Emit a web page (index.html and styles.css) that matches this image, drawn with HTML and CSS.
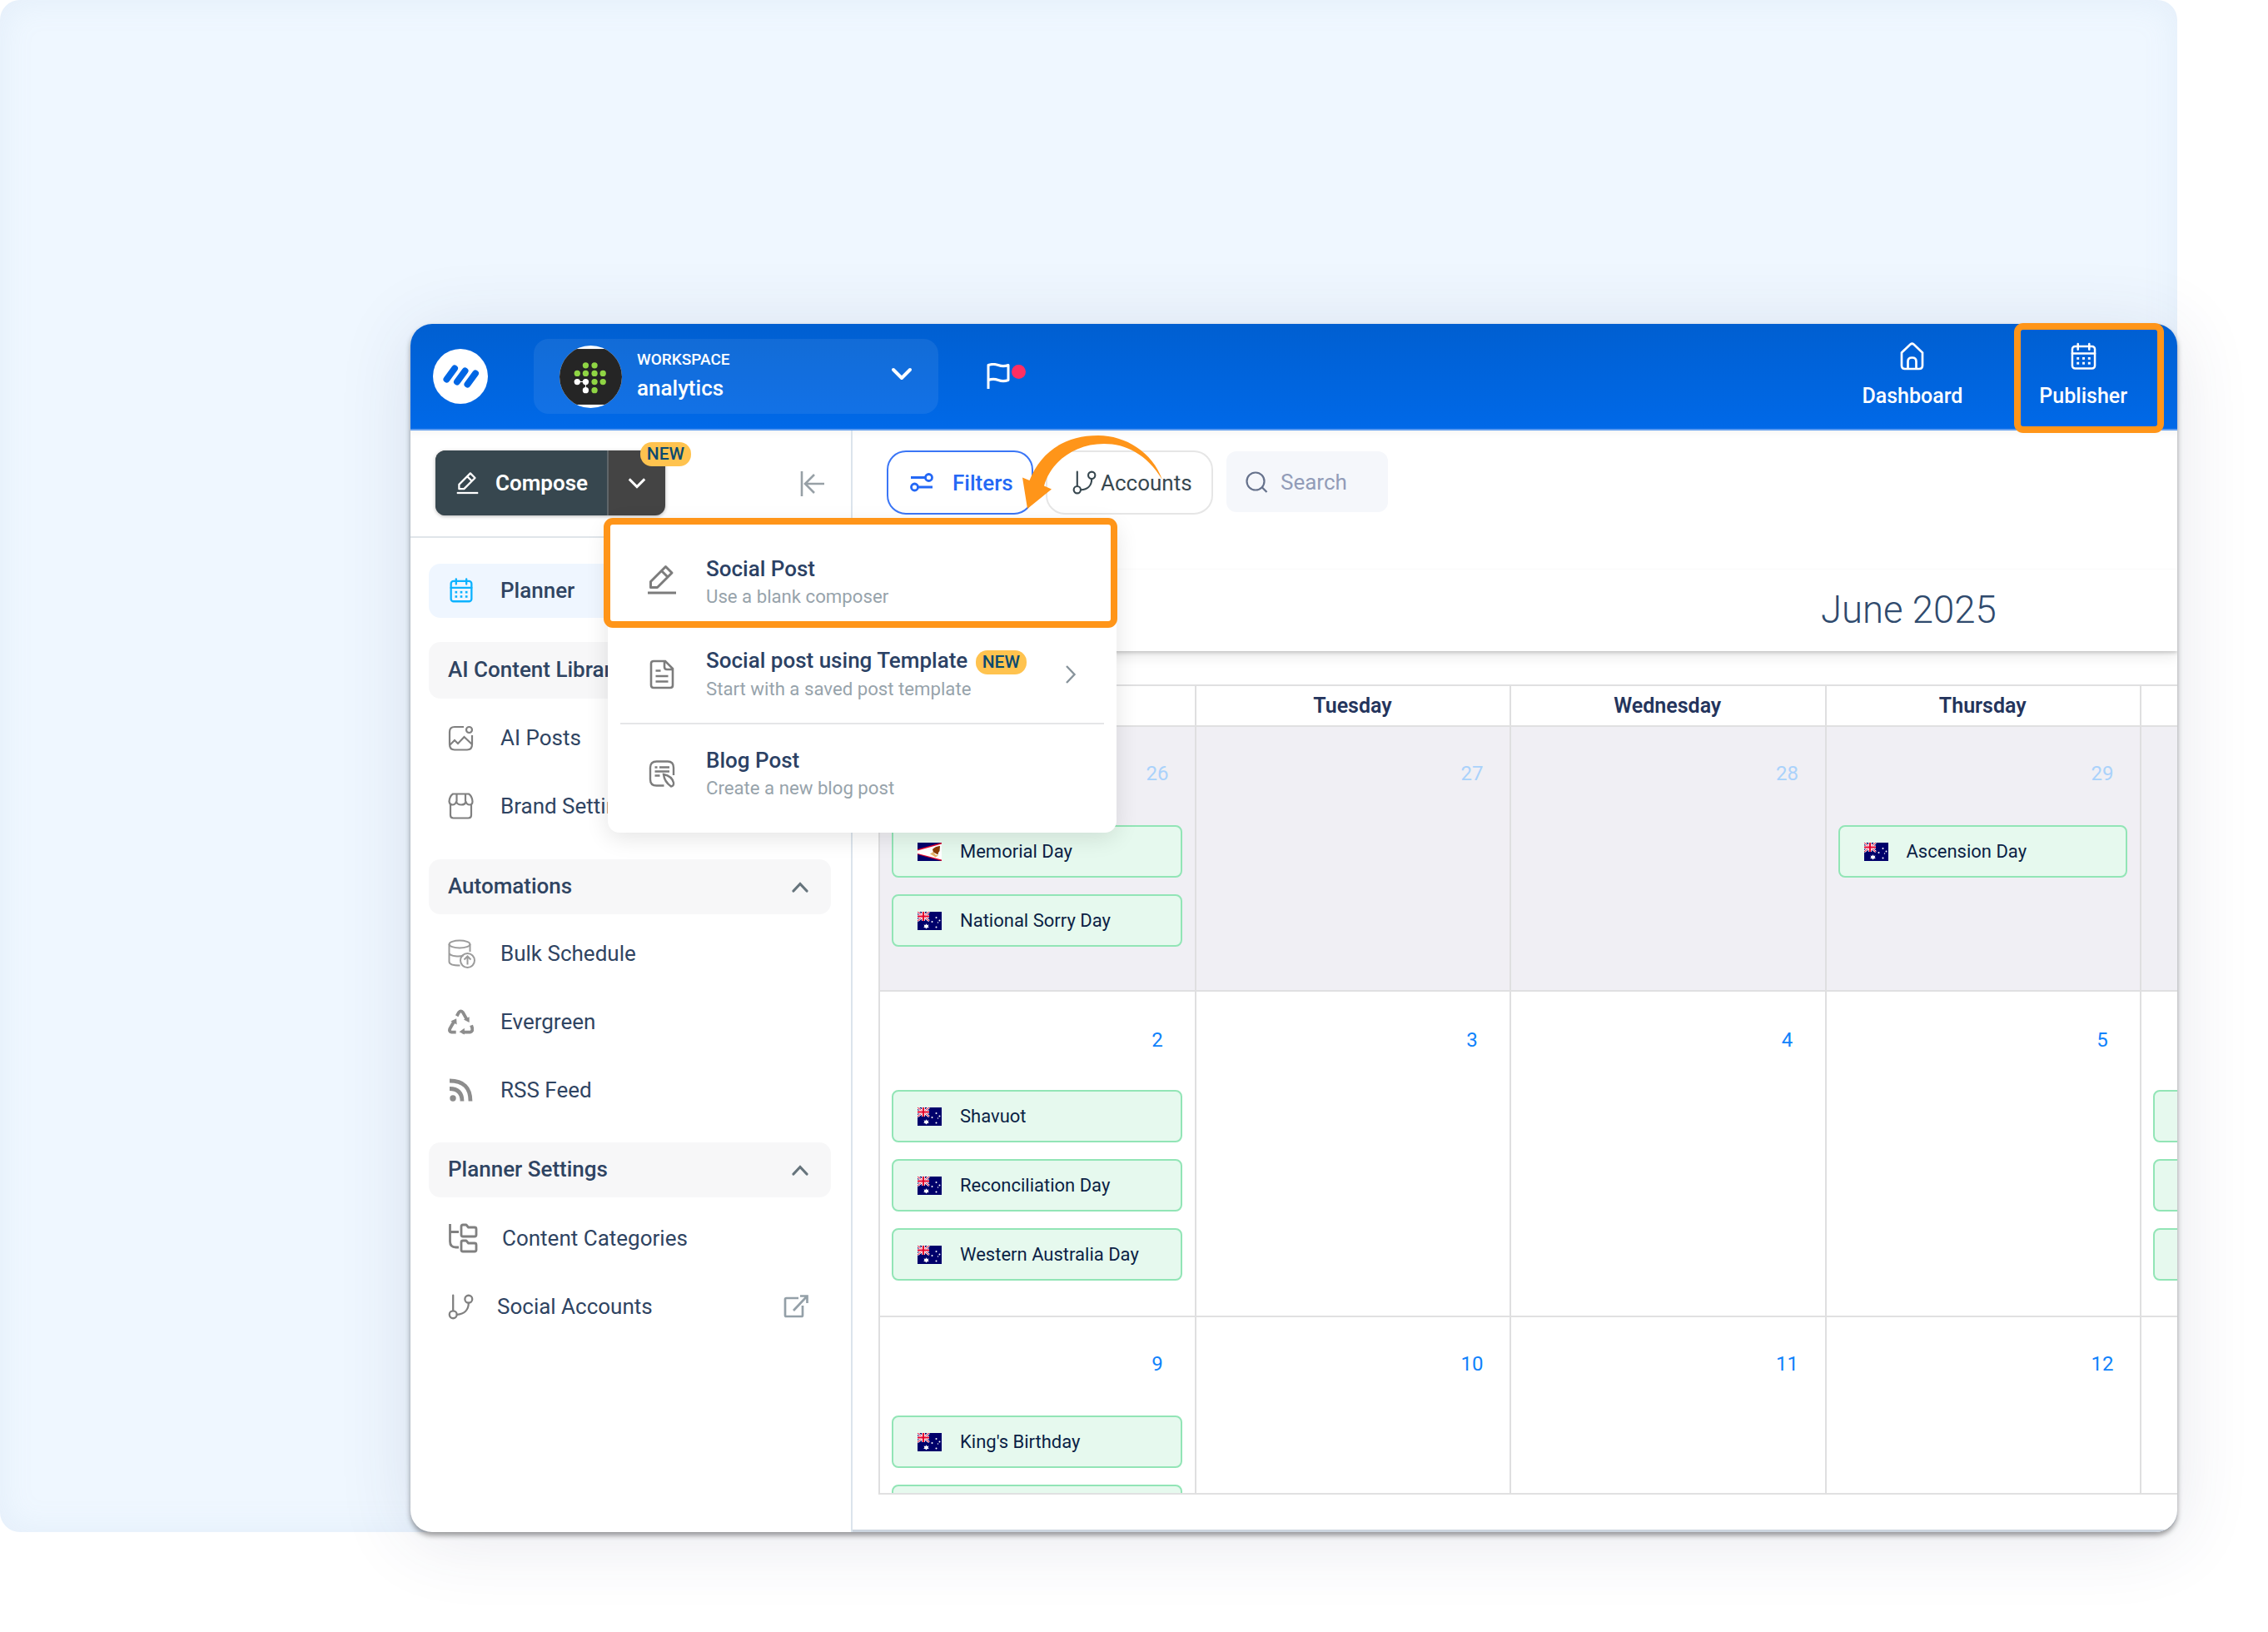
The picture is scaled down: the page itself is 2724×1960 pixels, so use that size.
FILE: index.html
```html
<!DOCTYPE html>
<html lang="en">
  <head>
    <meta charset="utf-8">
    <title>Planner</title>
    <link rel="stylesheet" href="styles.css">
  </head>
  <body>
    <svg class="sprite" aria-hidden="true">
      <symbol id="calendar" viewBox="0 0 32 34">
        <g fill="none" stroke="currentColor" stroke-width="2.6" stroke-linecap="round">
          <rect x="2" y="4.500" width="28" height="27.500" rx="3.500"/>
          <path d="M2 13.500h28M9 1.500v7M23 1.500v7"/>
        </g>
        <g fill="currentColor">
          <rect x="7.500" y="18" width="3" height="3"/><rect x="14.500" y="18" width="3" height="3"/><rect x="21.500" y="18" width="3" height="3"/>
          <rect x="7.500" y="24" width="3" height="3"/><rect x="14.500" y="24" width="3" height="3"/><rect x="21.500" y="24" width="3" height="3"/>
        </g>
      </symbol>
      <symbol id="pencil" viewBox="0 0 36 36">
        <g fill="none" stroke="currentColor" stroke-width="3" stroke-linejoin="round">
          <path d="M4.500 27.500V20.500L22.500 2.500l7.500 7.500L12.500 27.500zM17.500 7.500l7.500 7.500"/>
          <path d="M1 34h34"/>
        </g>
      </symbol>
      <symbol id="branch" viewBox="0 0 30 30">
        <g fill="none" stroke="currentColor" stroke-width="2.2" stroke-linecap="round">
          <circle cx="6" cy="24" r="4.300"/><circle cx="24" cy="6" r="4.300"/>
          <path d="M6 1.500v18M24 10.500c0 8-5 13-13.500 13.500"/>
        </g>
      </symbol>
      <symbol id="up" viewBox="0 0 20 14">
        <path d="M2 12l8-8.500 8 8.500" fill="none" stroke="currentColor" stroke-width="3.200" stroke-linecap="round"/>
      </symbol>
      <symbol id="down" viewBox="0 0 26 16">
        <path d="M3 3l10 10L23 3" fill="none" stroke="currentColor" stroke-width="4" stroke-linecap="round" stroke-linejoin="round"/>
      </symbol>
      <symbol id="au" viewBox="0 0 29 22">
        <rect width="29" height="22" fill="#00006b"/>
        <path d="M0 0l14 11M14 0L0 11" stroke="#fff" stroke-width="2.600"/>
        <path d="M0 0l14 11M14 0L0 11" stroke="#e4002b" stroke-width="1"/>
        <path d="M7 0v11M0 5.500h14" stroke="#fff" stroke-width="3.800"/>
        <path d="M7 0v11M0 5.500h14" stroke="#e4002b" stroke-width="2.200"/>
        <g fill="#fff">
          <path d="M10.500 14.300l1 1.700 2-.4-.9 1.800 1.200 1.500-2 .2-1.300 1.500-1.300-1.500-2-.2 1.200-1.500-.9-1.800 2 .4z"/>
          <circle cx="22.500" cy="7" r="1"/><circle cx="17.500" cy="12" r="1"/><circle cx="26.500" cy="10.500" r="1"/><circle cx="22.500" cy="18.500" r="1"/><circle cx="24.500" cy="13" r=".7"/>
        </g>
      </symbol>
      <symbol id="as" viewBox="0 0 29 22">
        <rect width="29" height="22" fill="#00006b"/>
        <path d="M29 0L0 8v6L29 22z" fill="#e4002b"/>
        <path d="M29 1.500L0 9.500v3.500L29 20.500z" fill="#fff"/>
        <path d="M18 8c3-3 5.500-3.500 9-4l-.5 6-1.500 2-.5 2.500-3.500-2-2-1z" fill="#8a3a00"/>
        <path d="M15 13.500l4-2.500 2.500 3.500 3.500 1-3.500 2-3-2z" fill="#e5b36a"/>
      </symbol>
    </svg>

    <div class="backdrop">
      <div class="window">
        <header class="topbar">
          <svg class="logo" viewBox="0 0 66 66">
            <circle cx="33" cy="33" r="33" fill="#fff"/>
            <path d="M16.500 36.500L26 23.500M29 39.500L38.500 26.500M41.500 42.500L51 29.500" stroke="#0066e4" stroke-width="8" stroke-linecap="round"/>
          </svg>
          <div class="workspace">
            <svg class="avatar" viewBox="0 0 74 74">
              <clipPath id="round"><circle cx="37" cy="37" r="37"/></clipPath>
              <g clip-path="url(#round)">
                <rect width="74" height="74" fill="#fff"/>
                <rect y="4" width="74" height="66" fill="#252525"/>
              </g>
              <g fill="#8fd544">
                <circle cx="31" cy="23.500" r="3.600"/><circle cx="41.500" cy="23.500" r="3.600"/>
                <circle cx="21" cy="33" r="3.600"/><circle cx="31" cy="33" r="3.600"/><circle cx="41.500" cy="33" r="3.600"/><circle cx="51.500" cy="33" r="3.600"/>
                <circle cx="41.500" cy="43" r="3.600"/><circle cx="51.500" cy="43" r="3.600"/><circle cx="41.500" cy="53" r="3.600"/>
              </g>
              <g fill="#fff"><circle cx="21" cy="43" r="3.600"/><circle cx="31" cy="43" r="3.600"/><circle cx="31" cy="53" r="3.600"/></g>
              <path d="M21 43h10v10" fill="none" stroke="#fff"/>
            </svg>
            <div class="workspace-name">
              <small>WORKSPACE</small>
              <strong>analytics</strong>
            </div>
            <svg class="workspace-arrow"><use href="#down"/></svg>
          </div>
          <div class="flag">
            <svg width="28" height="32" viewBox="0 0 28 32">
              <path d="M2 31V2.500c4-1.500 8-1.500 12 0s8 1.500 12 0v18c-4 1.500-8 1.500-12 0s-8-1.500-12 0" fill="none" stroke="#fff" stroke-width="3" stroke-linejoin="round"/>
            </svg>
            <i class="dot"></i>
          </div>
          <nav class="mainnav">
            <a class="dashboard">
              <svg width="29" height="34" viewBox="0 0 29 34">
                <path d="M2 12.500L12.500 2.500q2-1.500 4 0L27 12.500V28q0 4-4 4H6q-4 0-4-4zM9.500 32V23q0-4.500 5-4.500t5 4.500v9" fill="none" stroke="#fff" stroke-width="2.700"/>
              </svg>
              Dashboard
            </a>
            <a class="publisher">
              <svg width="31" height="34"><use href="#calendar"/></svg>
              Publisher
            </a>
          </nav>
        </header>

        <div class="content">
          <aside class="sidebar">
            <div class="compose-row">
              <div class="compose">
                <div class="compose-main">
                  <svg width="27" height="28"><use href="#pencil"/></svg>
                  Compose
                </div>
                <div class="compose-more"><svg width="24" height="16" viewBox="0 0 26 16"><path d="M3 3l10 10L23 3" fill="none" stroke="currentColor" stroke-width="3.200"/></svg></div>
                <span class="new new-compose">NEW</span>
              </div>
              <svg class="collapse" width="30" height="32" viewBox="0 0 30 32">
                <path d="M2 1v30M29 16H6M17 5L6 16l11 11" fill="none" stroke="#97a0a6" stroke-width="2.600"/>
              </svg>
            </div>
            <div class="menu">
              <div class="item active">
                <svg class="ico" width="30" height="30"><use href="#calendar"/></svg>Planner
              </div>
              <div class="group first">AI Content Library</div>
              <div class="item">
                <svg class="ico" width="31" height="31" viewBox="0 0 31 31">
                  <g fill="none" stroke="currentColor" stroke-width="2.200">
                    <path d="M19 2H8Q2 2 2 8v15q0 6.500 6 6.500h15q6 0 6-6.500V12"/><circle cx="25.500" cy="5.500" r="3.500"/>
                    <path d="M2 24l6-6 4 4 7.500-8 9.500 9"/>
                  </g>
                </svg>AI Posts
              </div>
              <div class="item">
                <svg class="ico" width="31" height="32" viewBox="0 0 31 32">
                  <g fill="none" stroke="currentColor" stroke-width="2.200">
                    <path d="M3 14v13q0 3.500 3.500 3.500h18Q28 30.500 28 27V14"/>
                    <path d="M6 1.500h19q4 2.500 4.500 9 0 4-3.500 4t-4.500-4q-.5 4-5.500 4t-6-4q-1 4-4.500 4t-4-4Q2 4 6 1.500zM10.500 1.500v9M21 1.500v9"/>
                  </g>
                </svg>Brand Settings
              </div>
              <div class="group">Automations<svg class="up"><use href="#up"/></svg></div>
              <div class="item">
                <svg class="ico light" width="33" height="35" viewBox="0 0 33 35">
                  <g fill="none" stroke="currentColor" stroke-width="2">
                    <ellipse cx="14" cy="6" rx="12.500" ry="4.500"/>
                    <path d="M1.500 6v21c0 3 5 4.500 13 4.500M1.500 17c2 3.500 12 4.500 17 2.500M26.500 6v9"/>
                    <circle cx="23.500" cy="25.500" r="8.500"/><path d="M23.500 30.500v-10M19.500 24.500l4-4 4 4"/>
                  </g>
                </svg>Bulk Schedule
              </div>
              <div class="item">
                <svg class="ico" width="31" height="31" viewBox="0 0 32 31">
                  <g fill="none" stroke="#8d8d8d" stroke-width="4">
                    <path d="M11 8l2.500-4.500q2.500-3 5 0L23 11.500M8 14l-5.500 9.500q-1.500 4 2 4.500H10M29 19.500l1 3q1 5-2.500 5.500H18"/>
                  </g>
                  <path d="M26.500 9v7l-7-3.500zM3.500 14.500l7-3.500.5 7.500zM20.500 23v8L14 27.500z" fill="#8d8d8d"/>
                </svg>Evergreen
              </div>
              <div class="item">
                <svg class="ico" width="31" height="30" viewBox="0 0 31 30">
                  <circle cx="6" cy="25" r="3.700" fill="#8d8d8d"/>
                  <path d="M2 13.500q15 0 15 15M2 4q25 0 25 24.500" fill="none" stroke="#8d8d8d" stroke-width="4.800"/>
                </svg>RSS Feed
              </div>
              <div class="group settings">Planner Settings<svg class="up"><use href="#up"/></svg></div>
              <div class="item wide">
                <svg class="ico" width="36" height="36" viewBox="0 0 36 36">
                  <g fill="none" stroke="currentColor" stroke-width="2.800" stroke-linejoin="round">
                    <path d="M2.500 1v21q0 7 7 7H13M2.500 10.500H13"/>
                    <path d="M16 4q0-2 2-2h4l2.500 3H32q2 0 2 2v7q0 2-2 2H18q-2 0-2-2zM16 23q0-2 2-2h4l2.500 3H32q2 0 2 2v6q0 2-2 2H18q-2 0-2-2z"/>
                  </g>
                </svg>Content Categories
              </div>
              <div class="item narrow">
                <svg class="ico" width="31" height="31"><use href="#branch"/></svg>Social Accounts
                <svg class="external" width="30" height="28" viewBox="0 0 30 28">
                  <path d="M18 4H3.500Q2 4 2 5.500v19Q2 26 3.500 26h18q1.500 0 1.500-1.500V13M12 19L28 2M20 1.500h8.500V10" fill="none" stroke="#94a0a8" stroke-width="2.700"/>
                </svg>
              </div>
            </div>
          </aside>

          <main class="main">
            <div class="toolbar">
              <div class="btn filters">
                <svg width="28" height="23" viewBox="0 0 28 23">
                  <g fill="none" stroke="currentColor" stroke-width="2.800"><path d="M1 5.500h17M27 17H10"/><circle cx="22.500" cy="5.500" r="4"/><circle cx="5.500" cy="17" r="4"/></g>
                </svg>
                Filters
              </div>
              <div class="btn accounts"><svg width="29" height="29"><use href="#branch"/></svg>Accounts</div>
              <div class="search">
                <svg width="27" height="26" viewBox="0 0 27 26"><path d="M19.500 19l6 6" stroke="#66728c" stroke-width="2.300"/><circle cx="12" cy="12" r="10.500" fill="none" stroke="#66728c" stroke-width="2.200"/></svg>
                Search
              </div>
            </div>
            <div class="month">June 2025</div>
            <div class="calendar">
              <div class="cell head">Monday</div>
              <div class="cell head">Tuesday</div>
              <div class="cell head">Wednesday</div>
              <div class="cell head">Thursday</div>
              <div class="cell head"></div>

              <div class="cell past"><b>26</b>
                <div class="event"><svg><use href="#as"/></svg>Memorial Day</div>
                <div class="event"><svg><use href="#au"/></svg>National Sorry Day</div>
              </div>
              <div class="cell past"><b>27</b></div>
              <div class="cell past"><b>28</b></div>
              <div class="cell past"><b>29</b>
                <div class="event"><svg><use href="#au"/></svg>Ascension Day</div>
              </div>
              <div class="cell past"></div>

              <div class="cell week"><b>2</b>
                <div class="event"><svg><use href="#au"/></svg>Shavuot</div>
                <div class="event"><svg><use href="#au"/></svg>Reconciliation Day</div>
                <div class="event"><svg><use href="#au"/></svg>Western Australia Day</div>
              </div>
              <div class="cell week"><b>3</b></div>
              <div class="cell week"><b>4</b></div>
              <div class="cell week"><b>5</b></div>
              <div class="cell week"><b></b>
                <div class="event"></div>
                <div class="event"></div>
                <div class="event"></div>
              </div>

              <div class="cell last"><b>9</b>
                <div class="event"><svg><use href="#au"/></svg>King's Birthday</div>
                <div class="event"></div>
              </div>
              <div class="cell last"><b>10</b></div>
              <div class="cell last"><b>11</b></div>
              <div class="cell last"><b>12</b></div>
              <div class="cell last"></div>
            </div>
          </main>
        </div>
      </div>

      <div class="dropdown">
        <div class="option first-option">
          <svg width="36" height="36"><use href="#pencil"/></svg>
          <div><h4>Social Post</h4><p>Use a blank composer</p></div>
        </div>
        <div class="option second">
          <svg width="36" height="36" viewBox="0 0 36 36">
            <path d="M8 2h14l9 9v20q0 3-3 3H8q-3 0-3-3V5q0-3 3-3zM21 2v7q0 3 3 3h7M10.500 13.500h6M10.500 20h15M10.500 26.500h15" fill="none" stroke="currentColor" stroke-width="2.600"/>
          </svg>
          <div><h4>Social post using Template <span class="new">NEW</span></h4><p>Start with a saved post template</p></div>
          <svg class="next" width="14" height="24" viewBox="0 0 14 24"><path d="M2 2l9.500 10L2 22" fill="none" stroke="#87939b" stroke-width="2.400"/></svg>
        </div>
        <div class="option third">
          <svg width="36" height="36" viewBox="0 0 36 36">
            <g fill="none" stroke="currentColor" stroke-width="2.400">
              <path d="M32 20V11q0-7.500-7-7.500H11.500q-7.500 0-7.500 7.500v14q0 7.500 7.500 7.500h9"/>
              <path d="M9.500 10.500h3M15 10.500h12M9.500 15.500h17.500M9.500 20.500h6"/>
              <path d="M20 19q10 2 12 10 .5 4-3 4.500Q21 28 20 19z"/>
            </g>
          </svg>
          <div><h4>Blog Post</h4><p>Create a new blog post</p></div>
        </div>
      </div>

      <div class="mark mark-post"></div>
      <div class="mark mark-publisher"></div>
      <svg class="arrow" viewBox="1220 515 180 100">
        <path d="M1396 576C1377 545 1352 533 1326 533C1290 533 1262 555 1254 583.500L1263 587.500L1234 611L1228 573.500L1236.500 577C1250 543 1278 523 1319 523C1352 523 1384 543 1396 576z" fill="#ff9519"/>
      </svg>
    </div>
  </body>
</html>
```

FILE: styles.css
```css
html, body {
  margin: 0;
  padding: 0;
  background: #fff;
  font-family: Roboto, "Liberation Sans", sans-serif;
}
body {
  height: 1960px;
  overflow: hidden;
}
.sprite {
  display: none;
}
svg {
  display: block;
  flex: none;
}

.backdrop {
  position: relative;
  box-sizing: border-box;
  width: 2615px;
  height: 1840px;
  padding: 389px 0 0 493px;
  border-radius: 24px;
  background: #eff7ff;
  box-shadow: inset 0 0 40px rgba(150, 180, 205, .13);
}
.window {
  width: 2122px;
  height: 1451px;
  overflow: hidden;
  border-radius: 26px;
  background: #fff;
  box-shadow: 0 4px 6px rgba(0, 0, 0, .38), 0 8px 90px rgba(50, 60, 110, .12);
}

/* top bar */
.topbar {
  display: flex;
  align-items: center;
  box-sizing: border-box;
  height: 128px;
  padding-left: 27px;
  border-bottom: 2px solid #5c9bef;
  background: linear-gradient(#005fd1, #0069e8);
  color: #fff;
}
.logo {
  width: 66px;
  height: 66px;
}
.workspace {
  display: flex;
  align-items: center;
  box-sizing: border-box;
  width: 486px;
  height: 90px;
  margin-left: 55px;
  padding: 0 31px 0 31px;
  border-radius: 18px;
  background: rgba(255, 255, 255, .07);
}
.avatar {
  width: 75px;
  height: 75px;
}
.workspace-name {
  flex: 1;
  margin: -4px 0 0 18px;
}
.workspace-name small {
  display: block;
  font-size: 19px;
  font-weight: 500;
  line-height: 26px;
}
.workspace-name strong {
  display: block;
  margin-top: 5px;
  font-size: 26px;
  font-weight: 500;
  line-height: 32px;
}
.workspace-arrow {
  width: 26px;
  height: 16px;
  margin-top: -6px;
}
.flag {
  display: flex;
  margin-left: 58px;
}
.dot {
  width: 17px;
  height: 17px;
  margin: 2px 0 0 2px;
  border-radius: 50%;
  background: #ff2e63;
}
.mainnav {
  display: flex;
  margin: -3px 60px 0 auto;
}
.mainnav a {
  display: flex;
  flex-direction: column;
  align-items: center;
  gap: 16px;
  font-size: 25px;
  font-weight: 500;
  line-height: 30px;
}
.publisher {
  margin-left: 92px;
}

/* sidebar */
.content {
  display: flex;
  height: 1323px;
}
.sidebar {
  box-sizing: border-box;
  width: 531px;
  border-right: 2px solid #dbe4ec;
  color: #2f4462;
}
.compose-row {
  display: flex;
  align-items: flex-start;
  box-sizing: border-box;
  height: 129px;
  padding: 24px 0 0 30px;
  border-bottom: 2px solid #e0e5ea;
  box-shadow: inset 0 12px 10px -10px rgba(0, 0, 0, .05);
}
.compose {
  position: relative;
  display: flex;
  height: 78px;
  border-radius: 12px;
  background: #444;
  box-shadow: 0 1px 4px rgba(0, 0, 0, .3);
}
.compose-main {
  display: flex;
  align-items: center;
  gap: 20px;
  box-sizing: border-box;
  width: 208px;
  padding-left: 25px;
  border-radius: 12px 0 0 12px;
  border-right: 2px solid #5f6669;
  background: #37474f;
  color: #fff;
  font-size: 26px;
  font-weight: 600;
}
.compose-more {
  display: flex;
  align-items: center;
  justify-content: center;
  width: 68px;
  color: #fff;
}
.new {
  padding: 0 8px;
  border-radius: 14px;
  background: #ffc34f;
  color: #0a4a70;
  font-size: 21px;
  font-weight: 500;
  line-height: 29px;
}
.new-compose {
  position: absolute;
  top: -10px;
  right: -31px;
}
.collapse {
  margin: 24px 0 0 162px;
}
.menu {
  padding: 31px 24px 0 22px;
}
.item, .group {
  position: relative;
  display: flex;
  align-items: center;
  box-sizing: border-box;
  padding: 0 23px;
  font-size: 26px;
}
.item {
  height: 82px;
}
.ico {
  margin-right: 32px;
  color: #808080;
}
.light {
  margin-right: 30px;
  color: #9b9b9b;
}
.item.active {
  height: 65px;
  padding: 0 24px 2px;
  border-radius: 14px;
  background: #eff6ff;
  font-weight: 500;
}
.active .ico {
  margin-right: 32px;
  color: #0cb2ff;
}
.group {
  height: 66px;
  margin: 23px 0 6px;
  padding: 0 23px 2px;
  border-radius: 14px;
  background: #f7f7f8;
  font-weight: 500;
}
.group.first {
  height: 68px;
  margin: 29px 0 6px;
}
.group.settings {
  margin: 22px 0 8px;
}
.up {
  width: 20px;
  height: 14px;
  margin-top: 2px;
  margin-left: auto;
  margin-right: 4px;
  color: #66747c;
}
.wide .ico {
  margin-right: 29px;
}
.narrow .ico {
  margin-right: 28px;
}
.external {
  margin-left: auto;
  margin-right: 4px;
}

/* planner */
.main {
  flex: 1;
  min-width: 0;
  box-sizing: border-box;
  overflow: hidden;
  border-bottom: 3px solid #ccd5df;
}
.toolbar {
  display: flex;
  align-items: flex-start;
  box-sizing: border-box;
  height: 167px;
  padding: 24px 0 0 41px;
  border-bottom: 1px solid #fafafa;
  box-shadow: inset 0 12px 10px -10px rgba(0, 0, 0, .05);
  font-size: 26px;
}
.btn {
  display: flex;
  align-items: center;
  box-sizing: border-box;
  height: 77px;
  border: 2px solid #e6e6e6;
  border-radius: 23px;
  color: #37474f;
}
.filters {
  gap: 23px;
  width: 176px;
  padding-left: 26px;
  border-color: #3b76f6;
  color: #2468f5;
  font-weight: 500;
}
.accounts {
  gap: 5px;
  width: 201px;
  margin-left: 15px;
  padding-left: 30px;
}
.search {
  display: flex;
  align-items: center;
  gap: 15px;
  box-sizing: border-box;
  width: 194px;
  height: 73px;
  margin: 1px 0 0 16px;
  padding-left: 23px;
  border-radius: 12px;
  background: #f5f7fb;
  color: #929cb8;
  font-size: 26px;
}
.month {
  box-sizing: border-box;
  height: 98px;
  padding-left: 1163px;
  box-shadow: 0 2px 4px rgba(0, 0, 0, .18), 0 6px 16px rgba(0, 0, 0, .09);
  clip-path: inset(0 0 -30px 0);
  color: #2f4a6d;
  font-size: 45.5px;
  font-weight: 300;
  line-height: 97px;
}
.calendar {
  display: grid;
  grid-template-columns: 380px 378px 378.5px 378.5px 379px;
  grid-template-rows: 49px 318px 391px 215px;
  margin: 40px 0 0 31px;
}
.cell {
  box-sizing: border-box;
  overflow: hidden;
  padding: 0 15px 0 14px;
  border-top: 2px solid #e0e0e1;
  border-left: 2px solid #dfdfe0;
}
.head {
  color: #24345c;
  font-size: 25px;
  font-weight: 600;
  line-height: 47px;
  text-align: center;
}
.past {
  background: #f0eff4;
}
.last {
  border-bottom: 2px solid #e0e0e1;
}
.cell b {
  display: block;
  width: 28px;
  height: 118px;
  margin-left: auto;
  margin-right: 16px;
  color: #0f82fb;
  font-size: 24px;
  font-weight: 400;
  line-height: 113px;
  text-align: center;
}
.past b {
  color: #aad2fb;
}
.week b {
  line-height: 116px;
}
.event {
  display: flex;
  align-items: center;
  box-sizing: border-box;
  height: 63px;
  margin-bottom: 20px;
  padding-left: 29px;
  border: 2px solid #92e5b6;
  border-radius: 8px;
  background: #e6f9ee;
  color: #0b1f45;
  font-size: 22px;
}
.event svg {
  width: 29px;
  height: 22px;
  margin-right: 22px;
}

/* compose dropdown */
.dropdown {
  position: absolute;
  top: 626px;
  left: 730px;
  box-sizing: border-box;
  width: 611px;
  height: 374px;
  padding: 12px 15px 0;
  border-radius: 14px;
  background: #fff;
  box-shadow: 0 6px 28px rgba(0, 0, 0, .11);
}
.option {
  display: flex;
  align-items: center;
  height: 116px;
  padding-left: 32px;
  color: #7c7c7c;
}
.option > div {
  margin-left: 35px;
}
.first-option > div {
  margin-top: 7px;
}
.option h4 {
  margin: 0;
  color: #2b4164;
  font-size: 26px;
  font-weight: 500;
  line-height: 32px;
}
.option p {
  margin: 1px 0 0;
  color: #97a3ab;
  font-size: 22.2px;
  line-height: 32px;
}
.option .new {
  display: inline-block;
  margin-left: 3px;
}
.second {
  box-sizing: border-box;
  height: 116px;
  padding-bottom: 3px;
  border-bottom: 2px solid #e5e6e8;
}
.third {
  height: 118px;
}
.next {
  margin: 0 33px 0 auto;
}

/* callouts */
.mark {
  position: absolute;
  box-sizing: border-box;
  border: 8px solid #ff9519;
  border-radius: 11px;
}
.mark-post {
  top: 622px;
  left: 725px;
  width: 617px;
  height: 132px;
}
.mark-publisher {
  top: 388px;
  left: 2419px;
  width: 180px;
  height: 132px;
}
.arrow {
  position: absolute;
  top: 515px;
  left: 1220px;
  width: 180px;
  height: 100px;
}
```
